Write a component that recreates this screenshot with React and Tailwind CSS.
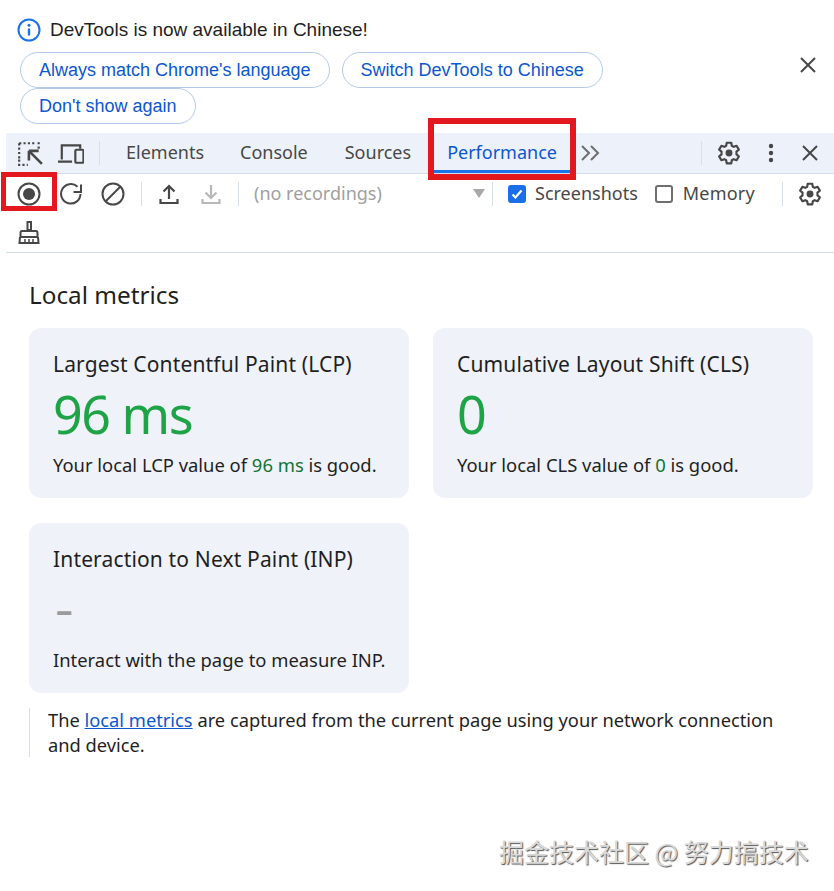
import React from "react";

const S = ({ children, className = "", w = 24, vb = "0 0 24 24" }) => (
  <svg width={w} height={w} viewBox={vb} fill="none" className={"shrink-0 " + className}>{children}</svg>
);
const Gear = () => (
  <S w={26} className="-mx-px">
    <path d="M9.900 2.500h4.200l.5 2.800 1.700 1 2.700-1 2.100 3.600-2.200 1.800v2.600l2.200 1.800-2.100 3.600-2.700-1-1.700 1-.5 2.800H9.900l-.5-2.800-1.700-1-2.700 1-2.100-3.600 2.200-1.800v-2.600L2.900 8.900 5 5.300l2.700 1 1.700-1z" stroke="#474747" strokeWidth="2" strokeLinejoin="round" />
    <circle cx="12" cy="12" r="3.200" fill="#474747" />
  </S>
);
const X = ({ c = "#474747" }) => (
  <S><path d="M5 5l14 14M19 5L5 19" stroke={c} strokeWidth="2" /></S>
);
const Sep = ({ h = "h-[24px]" }) => <div className={"w-px bg-[#d3e0f2] " + h} />;

const Pill = ({ children, className = "" }) => (
  <button className={"h-[36px] rounded-full border border-[#b5c8ee] px-[18px] text-[18px] text-[#0b57d0] font-['Liberation_Sans',sans-serif] " + className}>{children}</button>
);

const Card = ({ title, value, valueClass, children }) => (
  <div className="h-[170px] rounded-xl bg-[#eff2f9] pl-6 pt-[20px]">
    <div className="text-[21px] leading-[32px] tracking-[0.15px] text-[#1f1f1f]">{title}</div>
    <div className={"h-[66px] leading-[68px] " + valueClass}>{value}</div>
    <div className="mt-[5px] whitespace-nowrap text-[18.400px] leading-[28px] text-[#1f1f1f]">{children}</div>
  </div>
);

export default function App() {
  return (
    <div className="relative h-[891px] w-[834px] overflow-hidden bg-white font-['Noto_Sans',sans-serif]">
      {/* Infobar */}
      <div className="relative h-[133px] pl-[17px] pt-[17px]">
        <div className="flex h-[26px] items-center gap-[9px]">
          <S w={24}>
            <circle cx="12" cy="12" r="10.500" stroke="#1a73e8" strokeWidth="2" />
            <path d="M12 10.500v7" stroke="#1a73e8" strokeWidth="2.400" />
            <circle cx="12" cy="7.200" r="1.500" fill="#1a73e8" />
          </S>
          <span className="font-['Liberation_Sans',sans-serif] text-[19px] text-[#1f1f1f]">DevTools is now available in Chinese!</span>
        </div>
        <div className="ml-[3px] mt-[9px] flex gap-3">
          <Pill>Always match Chrome's language</Pill>
          <Pill>Switch DevTools to Chinese</Pill>
        </div>
        <Pill className="ml-[3px]">Don't show again</Pill>
        <button className="absolute left-[796px] top-[53px]"><X /></button>
      </div>

      {/* Tab bar */}
      <div className="ml-[6px] flex h-[41px] items-center border-b border-[#d3ddf0] bg-[#edf2fa] pl-[11px]">
        <S w={26}>
          <path d="M2 3h14M2 3v14" stroke="#474747" strokeWidth="2" strokeDasharray="2 2" />
          <path d="M20 2v8M2 18v5h8" stroke="#474747" strokeWidth="2" strokeDasharray="2 2" />
          <path d="M11 10h9M11 10v9M11 10l12 12" stroke="#474747" strokeWidth="2.400" />
        </S>
        <S w={26} className="ml-[15px]">
          <path d="M3.500 18V5h17v3M0 20h13" stroke="#474747" strokeWidth="2" />
          <rect x="16" y="9" width="7.500" height="12" rx="1" stroke="#474747" strokeWidth="2" />
        </S>
        <div className="ml-[15px] mr-[16px]"><Sep /></div>
        <div className="flex h-full text-[18px] text-[#474747]">
          <div className="flex items-center px-[10px] pb-[2px]">Elements</div>
          <div className="ml-[16px] flex items-center px-[10px] pb-[2px]">Console</div>
          <div className="ml-[17px] flex items-center px-[10px] pb-[2px]">Sources</div>
          <div className="ml-[12px] flex items-center border-b-[3px] border-[#1a73e8] px-[14px] pt-[2px] text-[#0b57d0]">Performance</div>
        </div>
        <S w={24} className="ml-[8px]"><path d="M3 5l7 7-7 7M12 5l7 7-7 7" stroke="#6e6e6e" strokeWidth="2" /></S>
        <div className="ml-[98px] mr-[15px]"><Sep /></div>
        <Gear />
        <S w={24} className="ml-[18px]">
          <circle cx="12" cy="5" r="2.200" fill="#474747" /><circle cx="12" cy="12" r="2.200" fill="#474747" /><circle cx="12" cy="19" r="2.200" fill="#474747" />
        </S>
        <div className="ml-[15px]"><X /></div>
      </div>

      {/* Toolbar */}
      <div className="ml-[6px] border-b border-[#d3ddf0]">
        <div className="flex h-[39px] items-center pl-[11px]">
          <S w={24}>
            <circle cx="12" cy="12" r="10.500" stroke="#474747" strokeWidth="2" />
            <circle cx="12" cy="12" r="6" fill="#474747" />
          </S>
          <S w={24} className="ml-[18px]">
            <path d="M21.500 12a9.700 9.700 0 1 1-3-7.200" stroke="#474747" strokeWidth="2" />
            <path d="M22 2.500v7.500h-7.500" stroke="#474747" strokeWidth="2" />
          </S>
          <S w={24} className="ml-[18px]">
            <circle cx="12" cy="12" r="10.500" stroke="#474747" strokeWidth="2" />
            <path d="M5 19L19 5" stroke="#474747" strokeWidth="2" />
          </S>
          <div className="ml-[16px] mr-[15px]"><Sep /></div>
          <S w={24}>
            <path d="M12 17V4M6.500 9.500L12 4l5.500 5.500" stroke="#474747" strokeWidth="2.200" />
            <path d="M3.500 17v4h17v-4" stroke="#474747" strokeWidth="2.200" />
          </S>
          <S w={24} className="ml-[18px]">
            <path d="M12 3v13M6.500 10.500L12 16l5.500-5.500" stroke="#b8b8b8" strokeWidth="2.200" />
            <path d="M3.500 17v4h17v-4" stroke="#b8b8b8" strokeWidth="2.200" />
          </S>
          <div className="ml-[15px]"><Sep /></div>
          <span className="ml-[15px] w-[219px] text-[18px] text-[#a0a0a0]">(no recordings)</span>
          <div className="h-0 w-0 border-x-[6px] border-t-[9px] border-x-transparent border-t-[#a8a8a8]" />
          <div className="ml-[7px]"><Sep /></div>
          <span className="ml-[15px] flex h-[18px] w-[18px] items-center justify-center rounded-[3px] bg-[#1a6ee8]">
            <svg width="14" height="14" viewBox="0 0 14 14" fill="none"><path d="M2.500 7.500l3 3 6-7" stroke="#fff" strokeWidth="2.200" /></svg>
          </span>
          <span className="ml-[9px] text-[18px] text-[#474747]">Screenshots</span>
          <span className="ml-[17px] h-[18px] w-[18px] rounded-[3px] border-2 border-[#6e6e6e]" />
          <span className="ml-[10px] text-[18px] tracking-[0.2px] text-[#474747]">Memory</span>
          <div className="ml-[27px]"><Sep /></div>
          <div className="ml-[15px]"><Gear /></div>
        </div>
        <div className="flex h-[39px] items-center pl-[11px]">
          <S w={24} className="-mt-px">
            <path d="M10.500 2h3.500v8h-3.500z" stroke="#474747" strokeWidth="2" />
            <path d="M5 11h14c1 0 1.500.800 1.500 2v4h-17v-4c0-1.200.500-2 1.500-2z" stroke="#474747" strokeWidth="2" />
            <path d="M3 17l-.500 6h19l-.500-6" stroke="#474747" strokeWidth="2" />
            <path d="M8 19v4M12 19v4M16 19v4" stroke="#474747" strokeWidth="1.500" />
          </S>
        </div>
      </div>

      {/* Content */}
      <div className="px-[29px] pt-[25px] pr-[21px]">
        <h2 className="text-[24.300px] leading-[34px] text-[#1f1f1f]">Local metrics</h2>
        <div className="mt-[16px] grid grid-cols-[380px_380px] gap-x-6 gap-y-[25px]">
          <Card title="Largest Contentful Paint (LCP)" value="96 ms" valueClass="text-[52px] tracking-[-1.500px] text-[#1ea446]">
            Your local LCP value of <span className="text-[#137333]">96 ms</span> is good.
          </Card>
          <Card title="Cumulative Layout Shift (CLS)" value="0" valueClass="text-[52px] tracking-[-1.500px] text-[#1ea446]">
            Your local CLS value of <span className="text-[#137333]">0</span> is good.
          </Card>
          <Card title="Interaction to Next Paint (INP)" value="–" valueClass="pl-[3px] pt-[1px] text-[33px] font-bold text-[#9a9a9a]">
            Interact with the page to measure INP.
          </Card>
        </div>
        <div className="mt-[15px] w-[745px] border-l border-[#d3ddf0] pl-[18px] text-[18.300px] leading-[24.500px] text-[#1f1f1f]">
          The <span className="text-[#0b57d0] underline">local metrics</span> are captured from the current page using your network connection and device.
        </div>
      </div>

      {/* Annotation boxes */}
      <div className="absolute left-[428px] top-[118px] h-[62px] w-[148px] border-[6px] border-[#e3181f]" />
      <div className="absolute left-[1px] top-[172px] h-[39px] w-[56px] border-[5px] border-[#e3181f]" />

      {/* Watermark */}
      <div className="absolute left-[499px] top-[834px] font-['Noto_Sans_CJK_SC',sans-serif] text-[25px] leading-[34px] text-[#d9d9d9] [text-shadow:1px_1px_1px_#555]">掘金技术社区 @ 努力搞技术</div>
    </div>
  );
}
